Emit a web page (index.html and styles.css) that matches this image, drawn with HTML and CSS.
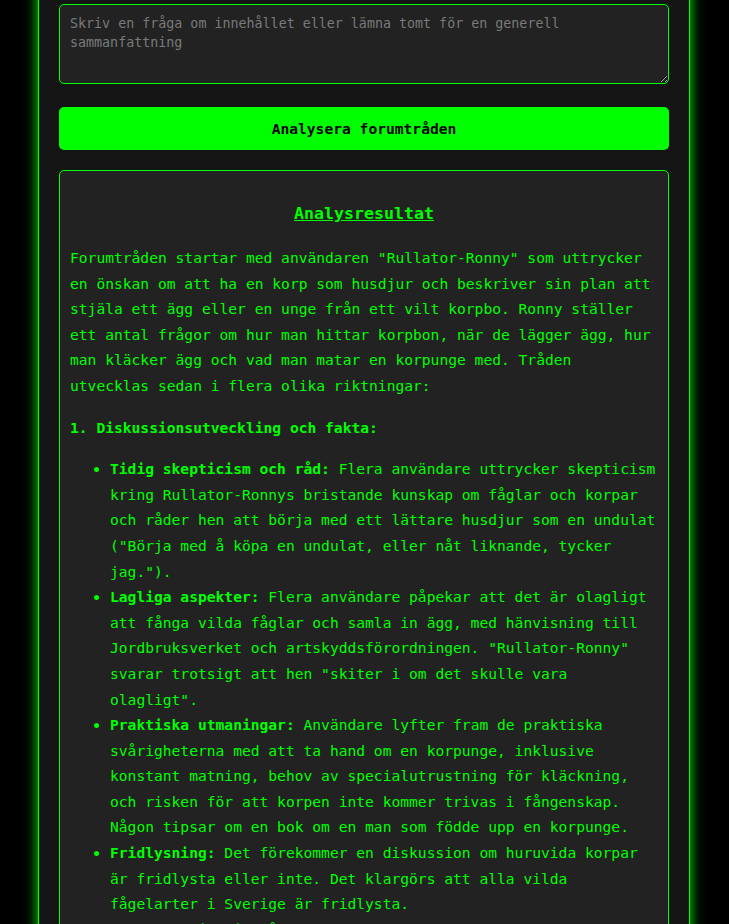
FILE: index.html
```html
<!DOCTYPE html>
<html lang="sv">
<head>
<meta charset="utf-8">
<title>Forumanalys</title>
<link rel="stylesheet" href="styles.css">
</head>
<body>
<main class="container">
  <textarea class="question" placeholder="Skriv en fråga om innehållet eller lämna tomt för en generell sammanfattning"></textarea>
  <button class="analyze">Analysera forumtråden</button>
  <section class="result">
    <h3 class="result-title">Analysresultat</h3>
    <p>Forumtråden startar med användaren "Rullator-Ronny" som uttrycker en önskan om att ha en korp som husdjur och beskriver sin plan att stjäla ett ägg eller en unge från ett vilt korpbo. Ronny ställer ett antal frågor om hur man hittar korpbon, när de lägger ägg, hur man kläcker ägg och vad man matar en korpunge med. Tråden utvecklas sedan i flera olika riktningar:</p>
    <p><strong>1. Diskussionsutveckling och fakta:</strong></p>
    <ul>
      <li><strong>Tidig skepticism och råd:</strong> Flera användare uttrycker skepticism kring Rullator-Ronnys bristande kunskap om fåglar och korpar och råder hen att börja med ett lättare husdjur som en undulat ("Börja med å köpa en undulat, eller nåt liknande, tycker jag.").</li>
      <li><strong>Lagliga aspekter:</strong> Flera användare påpekar att det är olagligt att fånga vilda fåglar och samla in ägg, med hänvisning till Jordbruksverket och artskyddsförordningen. "Rullator-Ronny" svarar trotsigt att hen "skiter i om det skulle vara olagligt".</li>
      <li><strong>Praktiska utmaningar:</strong> Användare lyfter fram de praktiska svårigheterna med att ta hand om en korpunge, inklusive konstant matning, behov av specialutrustning för kläckning, och risken för att korpen inte kommer trivas i fångenskap. Någon tipsar om en bok om en man som födde upp en korpunge.</li>
      <li><strong>Fridlysning:</strong> Det förekommer en diskussion om huruvida korpar är fridlysta eller inte. Det klargörs att alla vilda fågelarter i Sverige är fridlysta.</li>
      <li><strong>Humor och ironi:</strong> Många svar är skämtsamma och ironiska, och flera användare gör sig lustiga över planen att föda upp en korp på egen hand.</li>
    </ul>
  </section>
</main>
</body>
</html>
```
FILE: styles.css
```css
html, body {
  margin: 0;
  padding: 0;
  background: #000;
}

body {
  padding-right: 1px;
  font-family: "DejaVu Sans Mono", monospace;
  color: #00ff00;
  overflow: hidden;
}

.container {
  box-sizing: border-box;
  width: 652px;
  margin: -41px auto 0;
  padding: 44px 20px 40px;
  background: #141414;
  border: 1px solid #00ff00;
  box-shadow: 0 0 12px #00ff00;
}

.question {
  display: block;
  box-sizing: border-box;
  width: 100%;
  height: 80px;
  margin: 0 0 23px;
  padding: 10px;
  background: #222;
  color: #00ff00;
  border: 1px solid #00ff00;
  border-radius: 5px;
  font-family: "DejaVu Sans Mono", monospace;
  font-size: 13.33px;
  line-height: 1.4;
}

.question::placeholder {
  color: #7a7a7a;
}

.analyze {
  display: block;
  width: 100%;
  height: 43px;
  margin: 0 0 20px;
  padding: 0;
  background: #00ff00;
  color: #000;
  border: none;
  border-radius: 5px;
  font-family: "DejaVu Sans Mono", monospace;
  font-size: 14.62px;
  font-weight: bold;
}

.result {
  background: #222;
  border: 1px solid #00ff00;
  border-radius: 5px;
  padding: 10px;
  font-size: 14.62px;
  line-height: 25.6px;
}

.result-title {
  margin: 21px 0 19px;
  font-size: 16.6px;
  line-height: 24px;
  text-align: center;
  text-decoration: underline;
}

.result p {
  margin: 0 0 16px;
}

.result ul {
  margin: 16px 0;
  padding-left: 40px;
}
```
